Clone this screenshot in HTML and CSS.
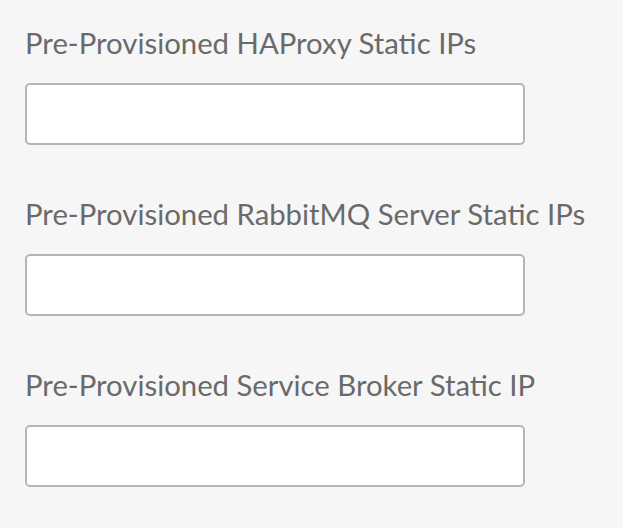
FILE: index.html
```html
<!DOCTYPE html>
<html lang="en">
<head>
<meta charset="utf-8">
<title>Static IPs</title>
<link rel="stylesheet" href="styles.css">
</head>
<body>
<form class="form">
  <div class="field">
    <label class="label" for="f1">Pre-Provisioned HAProxy Static IPs</label>
    <input class="input" id="f1" type="text">
  </div>
  <div class="field">
    <label class="label" for="f2">Pre-Provisioned RabbitMQ Server Static IPs</label>
    <input class="input" id="f2" type="text">
  </div>
  <div class="field">
    <label class="label" for="f3">Pre-Provisioned Service Broker Static IP</label>
    <input class="input" id="f3" type="text">
  </div>
</form>
</body>
</html>
```

FILE: styles.css
```css
html, body {
  margin: 0;
  padding: 0;
  background: #f6f6f6;
}
body {
  font-family: "Lato", "Liberation Sans", sans-serif;
}
.form {
  display: flex;
  flex-direction: column;
  gap: 49px;
  padding: 23px 0 0 25px;
}
.field {
  display: flex;
  flex-direction: column;
  gap: 20px;
}
.label {
  font-size: 29.3px;
  line-height: 40px;
  color: #6a6a6a;
  font-weight: 400;
}
.input {
  box-sizing: border-box;
  width: 500px;
  height: 62px;
  margin: 0;
  border: 2px solid #b5b5b5;
  border-radius: 5px;
  background: #fff;
  outline: none;
}
```
